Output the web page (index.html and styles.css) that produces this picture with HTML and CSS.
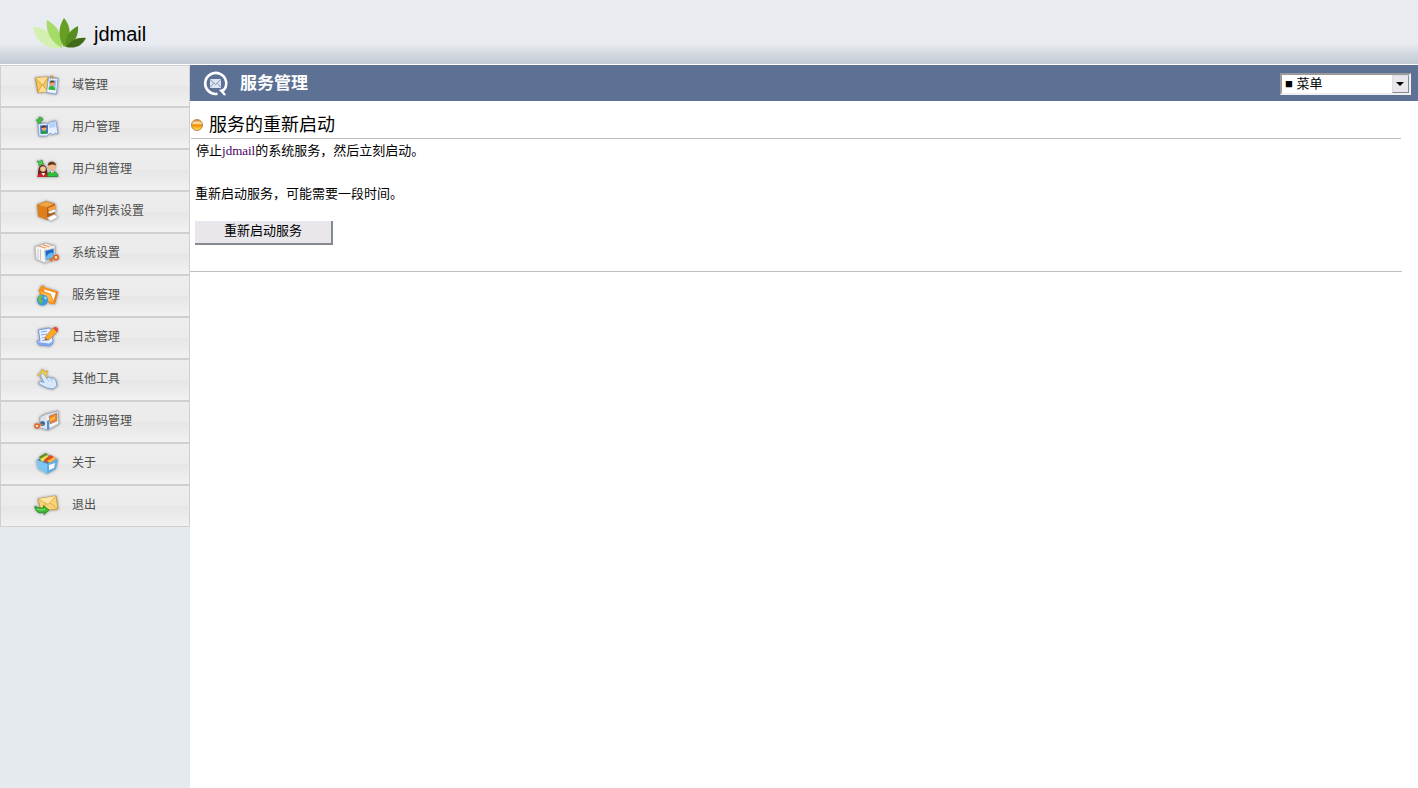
FILE: index.html
```html
<!DOCTYPE html>
<html lang="zh-CN">
<head>
	<meta charset="UTF-8">
	<meta name="viewport" content="width=device-width, initial-scale=1.0">
	<title>jdmail</title>
	<link rel="stylesheet" href="styles.css">
</head>

<body>
	<header class="header">
		<svg class="logo" viewBox="0 0 54 32" aria-hidden="true">
			<path fill="#d3f0b0" d="M0 9C11 9 23 17 28 30C15 32 3 25 0 9Z"/>
			<path fill="#a5dc68" d="M14 2C25 8 30 18 29 30C18 24 12 13 14 2Z"/>
			<path fill="#669f24" d="M31 0C39 9 38 21 31 29C25 20 25 9 31 0Z"/>
			<path fill="#578d20" d="M45 8C46 18 41 26 32 29C32 20 36 12 45 8Z"/>
			<path fill="#416b18" d="M53 20C49 28 42 31 33 29C38 22 45 19 53 20Z"/>
		</svg>
		<span class="brand">jdmail</span>
	</header>

	<div class="layout">
		<nav class="sidebar">
			<a class="item" href="#">
				<svg class="icon" viewBox="0 0 28 28">
					<path fill="#f6c65c" stroke="#c28a2c" stroke-width=".8" d="M2.500 6L15 5V19.500L5 20.500Z"/>
					<path fill="#ffdf90" stroke="#d09a3c" stroke-width=".8" d="M2.500 6L10 13.500L15 5M5 20.500L9 12.500L15 19.500"/>
					<path fill="#eef5ff" stroke="#7c9fd6" stroke-width=".9" d="M15.500 5.500L25 6.500L23.500 22L13.500 20.500Z"/>
					<path fill="#9cc6f4" d="M16.500 7.500L23.500 8L22.500 18L15.500 17Z"/>
					<path fill="#31b52d" d="M15.500 17.500C16 12.500 21.500 12.500 22.300 18.300Z"/>
					<circle cx="19.300" cy="11.800" r="2.500" fill="#e9a06a"/>
					<path fill="#70351d" d="M17 11C17 7.500 22 8 21.800 11C20 9.800 19 10.500 17 11Z"/>
					<path stroke="#d09328" fill="none" d="M17.500 7V4.500H20V7"/>
				</svg>
				域管理
			</a>
			<a class="item" href="#">
				<svg class="icon" viewBox="0 0 28 28">
					<path fill="#e6efff" stroke="#7f9fd4" stroke-width=".8" d="M5 10L13 9L15 10.500L17 8L23 7L25 20L22 19L20 21L17 19L14 22L6 22Z"/>
					<path fill="#b5d0fa" d="M16 9L22.500 8V13L16.500 14Z"/>
					<path fill="#4279cf" d="M7 11.500L15 11V19.500L7.500 20Z"/>
					<path fill="#2a9f36" d="M8 20C8 15 14 15 14.500 19.500Z"/>
					<circle cx="11" cy="14.500" r="2.400" fill="#eaa86f"/>
					<path fill="#633020" d="M8.500 14C8.500 10.500 14 11 13.500 14C11.500 13 10.500 14 8.500 14Z"/>
					<path fill="#42c141" stroke="#25912b" stroke-width=".6" d="M3 6L6 5.500L6 3L9 4L10 6L7.500 7L8 9L5 9.500L4.500 7.500Z"/>
				</svg>
				用户管理
			</a>
			<a class="item" href="#">
				<svg class="icon" viewBox="0 0 28 28">
					<path fill="#64261c" d="M5 20C5 13 6 8.500 10 9C14 9 14 14 15 20Z"/>
					<path fill="#c5232a" d="M4 21C5 16 14 15 15 21Z"/>
					<circle cx="10" cy="13" r="2.800" fill="#f4c79b"/>
					<path fill="#fff" d="M8.500 17H12L10.500 20Z"/>
					<path fill="#28c33c" stroke="#168024" stroke-width=".7" d="M14 20.500C14 14.500 24 13 25 20.500Z"/>
					<circle cx="19" cy="10.500" r="3.600" fill="#f0b986"/>
					<path fill="#68331d" d="M15 9.500C14 5 23 4 23 9.500C20 7.500 18 9 15 9.500Z"/>
					<path fill="#fff" d="M17.500 15H21L19.500 18Z"/>
					<path fill="#d83b26" d="M19 15.500L20 16L19.500 19Z"/>
					<path fill="#48d348" stroke="#239a30" stroke-width=".7" d="M4 5L7 5.500L9 4L9.500 6.500L11 8L8 8.500L6 10L6 7.500Z"/>
				</svg>
				用户组管理
			</a>
			<a class="item" href="#">
				<svg class="icon" viewBox="0 0 28 28">
					<path fill="#f3a642" stroke="#c97a21" stroke-width=".7" d="M4 7L13 3.500L22 6L14 9.500Z"/>
					<path fill="#dc7f1c" d="M4 7L14 9.500V22L5 18.500Z"/>
					<path fill="#b45b14" d="M14 9.500L22 6V18L14 22Z"/>
					<path fill="#f2a040" d="M15 10L23 7V11L16 14Z"/>
					<path fill="#fff" stroke="#b9b9bd" stroke-width=".6" d="M15 14L21 11.500L24 13L17 15.500ZM14 20L21 16.500L25 19L18 23Z"/>
				</svg>
				邮件列表设置
			</a>
			<a class="item" href="#">
				<svg class="icon" viewBox="0 0 28 28">
					<path fill="#f7f6f4" stroke="#aaa" stroke-width=".6" d="M2 7L12 3.500L22 6V19L12 23L3 19Z"/>
					<path fill="#f1a16d" d="M5 6.500L12 4L20 6L12 8.500Z"/>
					<path stroke="#fff" d="M8 5.500L15 7.500M12 4L18 6.500"/>
					<path stroke="#b5b8be" stroke-width=".8" d="M5 9V19M7.500 9.500V20"/>
					<path fill="#c4c9d2" d="M11 10L22 7.500V19L12 22Z"/>
					<path fill="#1769c7" d="M12.500 11L20.500 9V17.500L13 20Z"/>
					<path fill="#68b5f4" d="M13 17C15 13 18 12 20.500 13V17.500L13 20Z"/>
					<path stroke="#e36c18" stroke-width="1.800" fill="none" d="M16 20L21 18M18 19L19 21.500"/>
					<circle cx="23" cy="17.500" r="2.200" stroke="#e65f17" stroke-width="1.500" fill="#ffe0a2"/>
				</svg>
				系统设置
			</a>
			<a class="item" href="#">
				<svg class="icon" viewBox="0 0 28 28">
					<path fill="#f7931f" d="M6 8L8 4L11 3.500L12 5.500L22 8.500L25 10L22 22L18 22L8 17Z"/>
					<path fill="#fff" d="M11 7.500L23 11L21 19L12 15Z"/>
					<path fill="#ffb548" stroke="#ea7d12" stroke-width=".8" d="M6 8L17.500 12L21.500 22L11 17.500Z"/>
					<path fill="#f57e10" d="M22 21L25 10L23.500 9L20.500 19Z"/>
					<circle cx="9.500" cy="18" r="5.500" fill="#3799df"/>
					<path fill="#6bbb4e" d="M4.500 16L7 13L10 14L8 17L10 19L8 22L6 20Z"/>
					<path fill="#b2e2fb" d="M11 14L14 16L12 18Z"/>
				</svg>
				服务管理
			</a>
			<a class="item" href="#">
				<svg class="icon" viewBox="0 0 28 28">
					<path fill="#e8f1ff" stroke="#688fdf" stroke-width=".9" d="M5.500 6L16 4L19 6L20 19L17 22L6 21L4 17L7 17Z"/>
					<path fill="#7ba6f2" d="M5 18L16 19.500L20 17L17.500 22L6.500 20.800Z"/>
					<path stroke="#86aae4" d="M8 8L14 7M8 11L14 10M9 14L15 13M9 16.500L16 16"/>
					<path fill="#f8aa27" stroke="#db7421" stroke-width=".7" d="M13 12L20 4L24 8L17 15L12 16Z"/>
					<path fill="#e74a38" d="M20 4C23 1 27 5 24 8Z"/>
					<path fill="#59483b" d="M12 16L13 14L14 15.500Z"/>
				</svg>
				日志管理
			</a>
			<a class="item" href="#">
				<svg class="icon" viewBox="0 0 28 28">
					<path fill="#ffd53c" stroke="#d9a71d" stroke-width=".7" d="M9.500 3L11 6L14.500 5L13 8.500L15 12L11 11L8 13L7.500 10L4.500 9L7.500 7Z"/>
					<path fill="#d7e8fd" stroke="#7ca0cf" stroke-width=".9" d="M8 8C9.500 6.500 11 8 14 12.500C15.500 10.500 17 11.500 18 12.500C20 11 22 13 23 15L24 20L20 23L14 22L6 18C5 15 8 15 11 16.500L7.500 10Z"/>
					<path stroke="#a9c6ec" d="M14 12.500L16 15.500M18 12.500L19 15.500"/>
				</svg>
				其他工具
			</a>
			<a class="item" href="#">
				<svg class="icon" viewBox="0 0 28 28">
					<path fill="#dfe3e9" stroke="#9aa1aa" stroke-width=".7" d="M7 9L13 6L25 3L26 16L15 22L7 20Z"/>
					<path fill="#f8f8f8" d="M14 8L25 4V15L15 20Z"/>
					<path fill="#f28121" stroke="#858c96" stroke-width=".7" d="M16 8L24 5V13L17 16Z"/>
					<path fill="#ffbb45" d="M17 11L22 8V11L17 13Z"/>
					<path fill="#4f91da" d="M14 13L16 12L16.500 21L14 22Z"/>
					<circle cx="9.500" cy="15.500" r="2.500" fill="#3775b6"/>
					<circle cx="9.500" cy="15.500" r="1" fill="#163555"/>
					<path stroke="#e77727" stroke-width="1.600" d="M5 17L10 16"/>
					<circle cx="4" cy="18" r="2" fill="#ffe1af" stroke="#e66022" stroke-width="1.400"/>
				</svg>
				注册码管理
			</a>
			<a class="item" href="#">
				<svg class="icon" viewBox="0 0 28 28">
					<path fill="#4b83ae" d="M4 10L14 5L24 9L14 14Z"/>
					<path fill="#5a8d27" d="M6 7L13 3L15 5L8 10Z"/>
					<path fill="#e5dd54" d="M7 9L14 5L17 7L9 12Z"/>
					<path fill="#dd481f" d="M11 10L17 5L21 7L14 13Z"/>
					<path fill="#ffb638" d="M14 11L21 7L23 9L17 13Z"/>
					<path fill="#80c6f2" d="M3 10L14 14V24L5 19Z"/>
					<path fill="#62aee2" d="M14 14L25 9L23 19L14 24Z"/>
					<path fill="#f7fbff" d="M16 15L22 13L21 18L16 20Z"/>
				</svg>
				关于
			</a>
			<a class="item" href="#">
				<svg class="icon" viewBox="0 0 28 28">
					<path fill="#f8d375" stroke="#c49a48" stroke-width=".9" d="M5 7L23 4L25 17L8 19Z"/>
					<path fill="#ffe6a2" stroke="#d3a554" stroke-width=".8" d="M5 7L15 12.500L23 4M8 19L13 11.500M25 17L17 11"/>
					<path fill="#3dbb33" stroke="#228323" stroke-width=".8" d="M2 14C4 16 7 16 10.500 16V13.500L16 18L11 22.500V20C6 22.500 2 19 2 14Z"/>
					<path stroke="#92e277" d="M4 17C7 18.500 10 18 12 17"/>
				</svg>
				退出
			</a>
		</nav>

		<main class="main">
			<div class="titlebar">
				<svg class="title-icon" viewBox="0 0 26 26" aria-hidden="true">
					<path fill="none" stroke="#fff" stroke-width="2.600" d="M14.500 22.800A10.500 10.500 0 1 1 20.500 19.500"/>
					<path fill="#fff" d="M16 19L22.500 17L20.500 20L23 24L21 24.500Z"/>
					<path fill="#dce4f3" d="M7 8H18V17H7Z"/>
					<path fill="none" stroke="#8297b8" d="M7 8.500L12.500 13.500L18 8.500M7 16.500L10.500 12.500M18 16.500L14.500 12.500"/>
				</svg>
				<h1>服务管理</h1>
				<div class="menu">
					<select aria-label="菜单">
						<option>■ 菜单</option>
					</select>
				</div>
			</div>

			<section class="content">
				<h2><span class="bullet"></span>服务的重新启动</h2>
				<div class="panel">
					<p class="desc">停止<span class="name">jdmail</span>的系统服务，然后立刻启动。</p>
					<p class="note">重新启动服务，可能需要一段时间。</p>
					<button type="button" class="restart">重新启动服务</button>
				</div>
			</section>
		</main>
	</div>
</body>

</html>
```
FILE: styles.css
```css
*,
*::after,
*::before {
	box-sizing: border-box;
}

body {
	margin: 0;
	min-height: 100vh;
	display: flex;
	flex-direction: column;
	background-color: #fff;
	color: #000;
	font-family: "Liberation Serif", "Noto Sans CJK SC", serif;
	font-size: 13px;
	line-height: 20px;
}

h1,
h2,
p {
	margin: 0;
	font-weight: normal;
}

.header {
	height: 65px;
	padding: 4px 33px 0;
	display: flex;
	align-items: center;
	gap: 7px;
	border-bottom: 1px solid #fff;
	background: linear-gradient(#e8ebf0 0, #e8ebf0 44px, #d6dbe2 52px, #c1cad3 64px);
}

.logo {
	width: 54px;
	height: 32px;
}

.brand {
	font-family: "Liberation Sans", sans-serif;
	font-size: 20px;
}

.layout {
	flex: 1;
	display: flex;
}

.sidebar {
	width: 190px;
	flex-shrink: 0;
	background-color: #e4eaed;
}

.item {
	height: 42px;
	padding: 0 32px 2px;
	display: flex;
	align-items: center;
	gap: 11px;
	border: 1px solid #d0d0d0;
	background: linear-gradient(#ededed 0, #ebebeb 50%, #e6e6e6 51%, #f1f1f1 100%);
	color: #4d4d4d;
	font-size: 12px;
	text-decoration: none;
}

.icon {
	width: 28px;
	height: 28px;
	margin-top: 2px;
	fill: none;
	filter: drop-shadow(0 0 1px #aaa) drop-shadow(0 0 1px #bbb);
}

.main {
	flex: 1;
	min-width: 0;
}

.titlebar {
	height: 36px;
	padding: 1px 7px 0 13px;
	display: flex;
	align-items: center;
	background-color: #5c7194;
}

.title-icon {
	width: 26px;
	height: 26px;
}

h1 {
	margin-left: 11px;
	color: #fff;
	font-size: 17px;
	font-weight: bold;
}

.menu {
	position: relative;
	margin-left: auto;
	width: 131px;
	height: 22px;
	border: 2px solid;
	border-color: #9a9a9a #f0f0f0 #f0f0f0 #9a9a9a;
}

.menu select {
	appearance: none;
	display: block;
	width: 100%;
	height: 100%;
	padding: 0 20px 0 3px;
	border: 0;
	border-radius: 0;
	background-color: #fff;
	color: #000;
	font-family: "Liberation Sans", "Noto Sans CJK SC", sans-serif;
	font-size: 13px;
}

/* drop-down button over the right end of the select */
.menu::before {
	content: "";
	position: absolute;
	top: 0;
	right: 0;
	width: 17px;
	height: 18px;
	border: 1px solid;
	border-color: #dce0e8 #858990 #858990 #dce0e8;
	background-color: #e9e7ec;
	pointer-events: none;
}

.menu::after {
	content: "";
	position: absolute;
	top: 7px;
	right: 5px;
	border: 4px solid transparent;
	border-top-color: #000;
	border-bottom: 0;
	pointer-events: none;
}

.content {
	padding: 11px 16px 0 0;
}

h2 {
	margin: 0 1px;
	display: flex;
	align-items: center;
	gap: 6px;
	border-bottom: 1px solid #bebebe;
	font-size: 18px;
	line-height: 26px;
}

.bullet {
	width: 12px;
	height: 12px;
	border: 1px solid #b18457;
	border-radius: 50%;
	background: linear-gradient(#e07a12 0, #fff0bd 30%, #f08a00 50%, #ffe34c 100%);
}

.panel {
	padding: 2px 5px 26px;
	border-bottom: 1px solid #bebebe;
}

.desc {
	padding-left: 1px;
}

.name {
	color: #4b0060;
}

.note {
	margin: 23px 0 17px;
}

.restart {
	display: block;
	width: 138px;
	height: 24px;
	padding: 0 0 2px;
	border: 0 solid #858990;
	border-width: 0 2px 2px 0;
	background-color: #e9e7ec;
	color: #000;
	font-family: inherit;
	font-size: 13px;
	line-height: 18px;
}
```
